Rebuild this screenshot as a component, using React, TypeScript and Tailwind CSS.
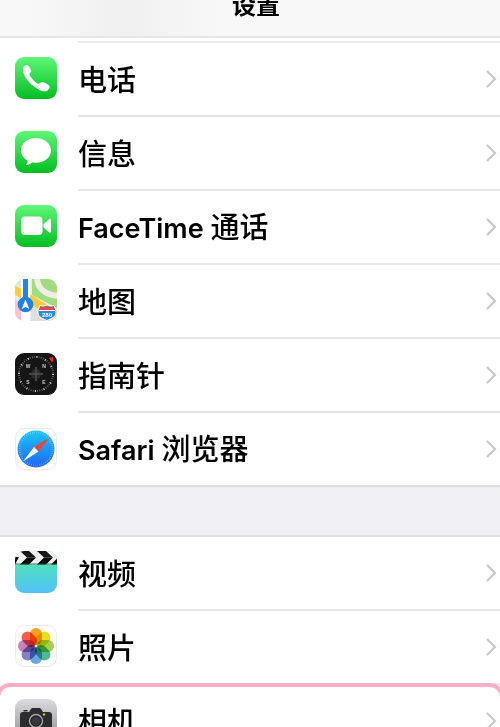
import type { ReactNode } from "react";

function Green({ id, children }: { id: string; children: ReactNode }) {
  return (
    <svg viewBox="0 0 42 42" className="size-[42px] shrink-0" aria-hidden="true">
      <defs>
        <linearGradient id={id} x1="0" y1="0" x2="0" y2="1">
          <stop offset="0" stopColor="#5ff777" />
          <stop offset="1" stopColor="#04be22" />
        </linearGradient>
      </defs>
      <rect width="42" height="42" rx="9" fill={`url(#${id})`} />
      {children}
    </svg>
  );
}

function PhoneIcon() {
  return (
    <Green id="phone">
      <path
        d="M8 11.5C8.4 9.2 10.3 7.5 12 8c1.5.4 3.7 4 4.2 5.7.4 1.4-1.8 2.3-1.8 3.7 0 1.6 6.8 9 9 9.4 1.5.3 2.4-1.9 4-1.7 1.7.2 6.2 2.6 7.1 4 .9 1.6-1.1 4.300-3 5C28 35.4 20 31.5 14.5 25.5 10.3 21 7.4 15.5 8 11.5z"
        fill="#fff"
      />
    </Green>
  );
}

function MessagesIcon() {
  return (
    <Green id="messages">
      <path
        d="M21 7C12.6 7 6 12.4 6 19.5c0 4.200 2.500 7.900 6.700 10.100.1 1.600-.7 3.200-2 4.500 2.500-.2 4.800-1.200 6.500-2.700 1.200.3 2.500.4 3.800.4 8.400 0 15-5.500 15-12.300S29.400 7 21 7z"
        fill="#fff"
      />
    </Green>
  );
}

function FaceTimeIcon() {
  return (
    <Green id="facetime">
      <rect x="6" y="11.5" width="21.5" height="18.5" rx="4" fill="#fff" />
      <path d="M28.5 19.2 34 14.2c.9-.7 2-.4 2 .8v11.5c0 1.2-1.1 1.5-2 .8l-5.500-5z" fill="#fff" />
    </Green>
  );
}

function MapsIcon() {
  return (
    <svg viewBox="0 0 42 42" className="size-[42px] shrink-0" aria-hidden="true">
      <clipPath id="maps">
        <rect width="42" height="42" rx="9" />
      </clipPath>
      <g clipPath="url(#maps)">
        <rect width="42" height="42" fill="#efede4" />
        <path d="M0 0h6v12L0 7z" fill="#dcebd0" />
        <path d="M17 0h25v29L17 16z" fill="#9fdd80" />
        <path d="M22-2c0 11 8 18 22 19" fill="none" stroke="#efede4" strokeWidth="6" />
        <path d="M0 20l7 6v16H0z" fill="#fbc3cf" />
        <path d="M16 26l26 12v4H16z" fill="#dfdfda" />
        <path d="M-2 10 44 37" stroke="#fdcb3b" strokeWidth="8" />
        <path d="M6 0h9v42H6z" fill="#fff" />
        <path d="M15 15.500l6 3.500v9l-6-3.500z" fill="#fdcb3b" />
        <path d="M8 0h5v24H8z" fill="#2384e8" />
        <circle cx="10.5" cy="25.500" r="7.800" fill="#2080e3" />
        <path d="M10.5 20.500 6.700 30l3.800-2 3.800 2z" fill="#fff" />
        <path
          d="M25 26.500c2.500 1 4.500.5 7-.5 2.500 1 4.500 1.500 7 .5 1 3 2 4 2 7 0 5-5 6-9 8-4-2-9-3-9-8 0-3 1-4 2-7z"
          fill="#3289dc"
          stroke="#fff"
        />
        <path d="M25.500 27.500c2 .8 4.500.5 6.500-.5 2 1 4.500 1.300 6.500.5l1.500 4H24z" fill="#e5483d" />
        <path d="M24 31.500h16" stroke="#fff" strokeWidth="1" />
        <text x="32" y="37.500" fontSize="6" fontWeight="700" textAnchor="middle" fill="#fff" fontFamily="Liberation Sans, sans-serif">
          280
        </text>
      </g>
    </svg>
  );
}

function CompassIcon() {
  return (
    <svg viewBox="0 0 42 42" className="size-[42px] shrink-0" aria-hidden="true">
      <rect width="42" height="42" rx="9" fill="#151515" />
      <circle cx="21" cy="21" r="17" fill="none" stroke="#777" strokeWidth="2" strokeDasharray="0.7 1.525" />
      <circle cx="21" cy="21" r="17" fill="none" stroke="#ccc" strokeWidth="2" strokeDasharray="1 7.900" />
      <path d="M21 14v14M14 21h14" stroke="#777" strokeWidth="1" />
      <circle cx="21" cy="21" r="5" fill="#444" opacity="0.5" />
      <path d="M34 5l4-1 .5 4-2 1z" fill="#f22d20" />
      <g fontSize="5" fontWeight="700" textAnchor="middle" fill="#ccc" fontFamily="Liberation Sans, sans-serif">
        <text x="13" y="15">W</text>
        <text x="29" y="15">N</text>
        <text x="13" y="31">S</text>
        <text x="29" y="31">E</text>
      </g>
    </svg>
  );
}

function SafariIcon() {
  return (
    <svg viewBox="0 0 42 42" className="size-[42px] shrink-0" aria-hidden="true">
      <defs>
        <linearGradient id="safari" x1="0" y1="0" x2="0" y2="1">
          <stop offset="0" stopColor="#1bc5fb" />
          <stop offset="1" stopColor="#2068ef" />
        </linearGradient>
      </defs>
      <rect x="0.5" y="0.5" width="41" height="41" rx="9" fill="#fff" stroke="#ececec" />
      <circle cx="21" cy="21" r="18.500" fill="url(#safari)" />
      <circle cx="21" cy="21" r="16.500" fill="none" stroke="#fff" strokeOpacity="0.4" strokeWidth="2" strokeDasharray="0.6 1.560" />
      <path d="M34.500 9.500 19 19l4.500 4.500z" fill="#f4403a" />
      <path d="M8 33.500 19 19l4.500 4.500z" fill="#f5f8fc" />
    </svg>
  );
}

function VideosIcon() {
  return (
    <svg viewBox="0 0 42 42" className="size-[42px] shrink-0" aria-hidden="true">
      <defs>
        <linearGradient id="videos" x1="0" y1="0" x2="0" y2="1">
          <stop offset="0.3" stopColor="#50e0b8" />
          <stop offset="1" stopColor="#52c1fb" />
        </linearGradient>
        <clipPath id="videos-clip">
          <rect width="42" height="42" rx="9" />
        </clipPath>
      </defs>
      <g clipPath="url(#videos-clip)">
        <rect width="42" height="42" fill="url(#videos)" />
        <rect width="42" height="13.500" fill="#f1f1f1" />
        <path d="M5 0h9l7 6.500h-9zM22 0h9l7 6.500h-9z" fill="#171717" />
        <path d="M12 6.500h9l-7 7H5zM29 6.500h9l-7 7h-9zM0 6h4l-4 7.500zM42 7.500v6h-6z" fill="#0c0c0c" />
        <path d="M0 13h42" stroke="#174f43" strokeWidth="0.8" />
      </g>
    </svg>
  );
}

const petals = [
  { angle: 0, color: "#f9a01b" },
  { angle: 45, color: "#e6df1b" },
  { angle: 90, color: "#a4d250" },
  { angle: 135, color: "#50b990" },
  { angle: 180, color: "#65a9e0" },
  { angle: 225, color: "#8381c3" },
  { angle: 270, color: "#c584bb" },
  { angle: 315, color: "#f1604d" },
];

function PhotosIcon() {
  return (
    <svg viewBox="0 0 42 42" className="size-[42px] shrink-0" aria-hidden="true">
      <rect x="0.5" y="0.5" width="41" height="41" rx="9" fill="#fff" stroke="#ececec" />
      <g className="isolate">
        {petals.map((petal) => (
          <rect
            key={petal.angle}
            x="15"
            y="3"
            width="12"
            height="17"
            rx="6"
            fill={petal.color}
            transform={`rotate(${petal.angle} 21 21)`}
            className="mix-blend-multiply"
          />
        ))}
      </g>
    </svg>
  );
}

function CameraIcon() {
  return (
    <svg viewBox="0 0 42 42" className="size-[42px] shrink-0" aria-hidden="true">
      <defs>
        <linearGradient id="camera" x1="0" y1="0" x2="0" y2="1">
          <stop offset="0" stopColor="#dbdade" />
          <stop offset="1" stopColor="#8e8d93" />
        </linearGradient>
      </defs>
      <rect width="42" height="42" rx="9" fill="url(#camera)" />
      <path
        d="M8 13h6l2-3c.4-.7.9-1 1.500-1h7c.6 0 1.100.3 1.500 1l2 3h6c1.700 0 3 1 3 3v14c0 2-1 3-3 3H8c-2 0-3-1-3-3V16c0-2 1-3 3-3zM8.500 11h4v1.500h-4z"
        fill="#2d2d2f"
      />
      <circle cx="21" cy="22" r="6.500" fill="#252527" stroke="#a7a7aa" strokeWidth="1.400" />
      <circle cx="21" cy="22" r="4.300" fill="#38383b" />
      <circle cx="29" cy="15.500" r="1.200" fill="#f3b51b" />
    </svg>
  );
}

function Chevron() {
  return (
    <svg viewBox="0 0 12 20" className="h-5 w-3 shrink-0" aria-hidden="true">
      <path d="M2 2l8 8-8 8" fill="none" stroke="#c7c7cc" strokeWidth="2.200" />
    </svg>
  );
}

type RowProps = { icon: ReactNode; latin?: string; label: string; last?: boolean; marked?: boolean };

function Row({ icon, latin, label, last, marked }: RowProps) {
  return (
    <li className={last ? "relative border-b-2 border-[#dfdfe3]" : "relative"}>
      <a href="#" className="flex items-stretch pl-[15px]">
        <span className={`flex w-[63px] shrink-0 items-center ${last ? "" : "pb-1"}`}>{icon}</span>
        <span
          className={`flex flex-1 items-center justify-between pr-[3px] ${
            last ? "h-[72px]" : "h-[74px] border-b-2 border-[#e6e6e8]"
          }`}
        >
          <span className="pt-[3px] text-[29px] leading-10">
            {latin && <span className="text-[27px] font-semibold">{latin} </span>}
            {label}
          </span>
          <Chevron />
        </span>
      </a>
      {marked && <span className="absolute -inset-x-1 -top-[2px] bottom-0 rounded-[14px] border-4 border-[#ffadc8]" />}
    </li>
  );
}

export default function App() {
  return (
    <div className="h-screen overflow-hidden bg-white font-['Inter','Noto_Sans_CJK_SC',sans-serif] font-medium text-black">
      <header className="flex h-[38px] items-end justify-center overflow-hidden border-b-2 border-[#e6e6e7] bg-linear-to-r from-[#f8f8f8] from-5% via-[#f0f0f1] via-25% to-[#f8f8f8] to-45% pb-3 pl-3">
        <h1 className="text-[24px] font-semibold leading-9">设置</h1>
      </header>
      <div className="ml-[78px] mt-[3px] h-0.5 bg-[#ebebed]" />
      <ul>
        <Row icon={<PhoneIcon />} label="电话" />
        <Row icon={<MessagesIcon />} label="信息" />
        <Row icon={<FaceTimeIcon />} latin="FaceTime" label="通话" />
        <Row icon={<MapsIcon />} label="地图" />
        <Row icon={<CompassIcon />} label="指南针" />
        <Row icon={<SafariIcon />} latin="Safari" label="浏览器" last />
      </ul>
      <div className="h-[50px] border-b-2 border-[#e0e0e4] bg-[#efeff4]" />
      <ul>
        <Row icon={<VideosIcon />} label="视频" />
        <Row icon={<PhotosIcon />} label="照片" />
        <Row icon={<CameraIcon />} label="相机" marked />
      </ul>
    </div>
  );
}
